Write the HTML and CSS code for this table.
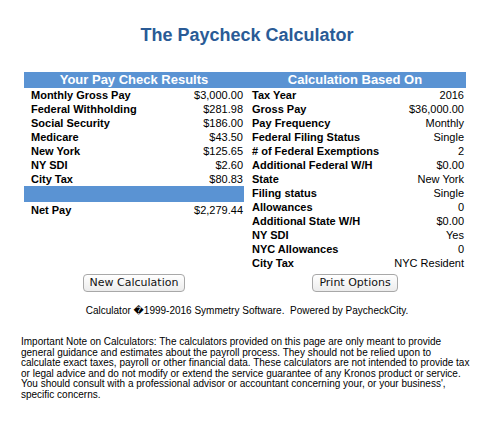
FILE: index.html
```html
<!DOCTYPE html>
<html>
<head>
<meta charset="utf-8">
<link rel="stylesheet" href="styles.css">
</head>
<body>
<h1 class="title">The Paycheck Calculator</h1>
<div class="calc">
  <div class="col left">
    <div class="head">Your Pay Check Results</div>
    <div class="row"><span class="lbl">Monthly Gross Pay</span><span class="val">$3,000.00</span></div>
    <div class="row"><span class="lbl">Federal Withholding</span><span class="val">$281.98</span></div>
    <div class="row"><span class="lbl">Social Security</span><span class="val">$186.00</span></div>
    <div class="row"><span class="lbl">Medicare</span><span class="val">$43.50</span></div>
    <div class="row"><span class="lbl">New York</span><span class="val">$125.65</span></div>
    <div class="row"><span class="lbl">NY SDI</span><span class="val">$2.60</span></div>
    <div class="row"><span class="lbl">City Tax</span><span class="val">$80.83</span></div>
    <div class="bar"></div>
    <div class="row net"><span class="lbl">Net Pay</span><span class="val">$2,279.44</span></div>
  </div>
  <div class="col right">
    <div class="head">Calculation Based On</div>
    <div class="row"><span class="lbl">Tax Year</span><span class="val">2016</span></div>
    <div class="row"><span class="lbl">Gross Pay</span><span class="val">$36,000.00</span></div>
    <div class="row"><span class="lbl">Pay Frequency</span><span class="val">Monthly</span></div>
    <div class="row"><span class="lbl">Federal Filing Status</span><span class="val">Single</span></div>
    <div class="row"><span class="lbl"># of Federal Exemptions</span><span class="val">2</span></div>
    <div class="row"><span class="lbl">Additional Federal W/H</span><span class="val">$0.00</span></div>
    <div class="row"><span class="lbl">State</span><span class="val">New York</span></div>
    <div class="row"><span class="lbl">Filing status</span><span class="val">Single</span></div>
    <div class="row"><span class="lbl">Allowances</span><span class="val">0</span></div>
    <div class="row"><span class="lbl">Additional State W/H</span><span class="val">$0.00</span></div>
    <div class="row"><span class="lbl">NY SDI</span><span class="val">Yes</span></div>
    <div class="row"><span class="lbl">NYC Allowances</span><span class="val">0</span></div>
    <div class="row"><span class="lbl">City Tax</span><span class="val">NYC Resident</span></div>
  </div>
  <div class="btncell"><button class="btn">New Calculation</button></div>
  <div class="btncell"><button class="btn">Print Options</button></div>
</div>
<p class="copy">Calculator <span class="repl">&#xFFFD;</span>1999-2016 Symmetry Software.&nbsp; Powered by PaycheckCity.</p>
<p class="note">Important Note on Calculators: The calculators provided on this page are only meant to provide general guidance and estimates about the payroll process. They should not be relied upon to calculate exact taxes, payroll or other financial data. These calculators are not intended to provide tax or legal advice and do not modify or extend the service guarantee of any Kronos product or service. You should consult with a professional advisor or accountant concerning your, or your business', specific concerns.</p>
</body>
</html>
```
FILE: styles.css
```css
html, body {
  margin: 0;
  padding: 0;
  background: #fff;
}
body {
  font-family: "Liberation Sans", Arial, sans-serif;
  color: #000;
  width: 494px;
}
.title {
  margin: 0;
  padding-top: 25px;
  height: 72px;
  box-sizing: border-box;
  font-size: 18px;
  line-height: 21px;
  font-weight: bold;
  color: #2a5b96;
  text-align: center;
}
.calc {
  margin-left: 24px;
  width: 442px;
  display: grid;
  grid-template-columns: 220px 222px;
  grid-template-rows: auto auto;
}
.col {
  display: flex;
  flex-direction: column;
}
.head {
  height: 16px;
  line-height: 16px;
  background: #5a93d3;
  color: #fff;
  font-weight: bold;
  font-size: 13px;
  text-align: center;
}
.row {
  display: flex;
  justify-content: space-between;
  height: 14px;
  line-height: 14px;
  font-size: 11px;
}
.lbl {
  font-weight: bold;
}
.left .row {
  padding-left: 7px;
  padding-right: 1px;
}
.right .row {
  padding-left: 8px;
  padding-right: 2px;
}
.bar {
  height: 16px;
  background: #5a93d3;
}
.left .net {
  margin-top: 1px;
}
.btncell {
  display: flex;
  justify-content: center;
  padding-top: 4px;
}
.btn {
  font-family: "DejaVu Sans", sans-serif;
  font-size: 11px;
  height: 18px;
  padding: 0 6px;
  line-height: 16px;
  border: 1px solid #a8a8a8;
  border-radius: 4px;
  background: linear-gradient(#ffffff, #ececec);
  color: #111;
}
.copy {
  margin: 13px 0 0;
  text-align: center;
  font-size: 10px;
  line-height: 12px;
}
.repl {
  font-family: "DejaVu Sans", sans-serif;
}
.note {
  margin: 20px 0 0 21px;
  width: 452px;
  font-size: 10px;
  line-height: 10.5px;
}
```
